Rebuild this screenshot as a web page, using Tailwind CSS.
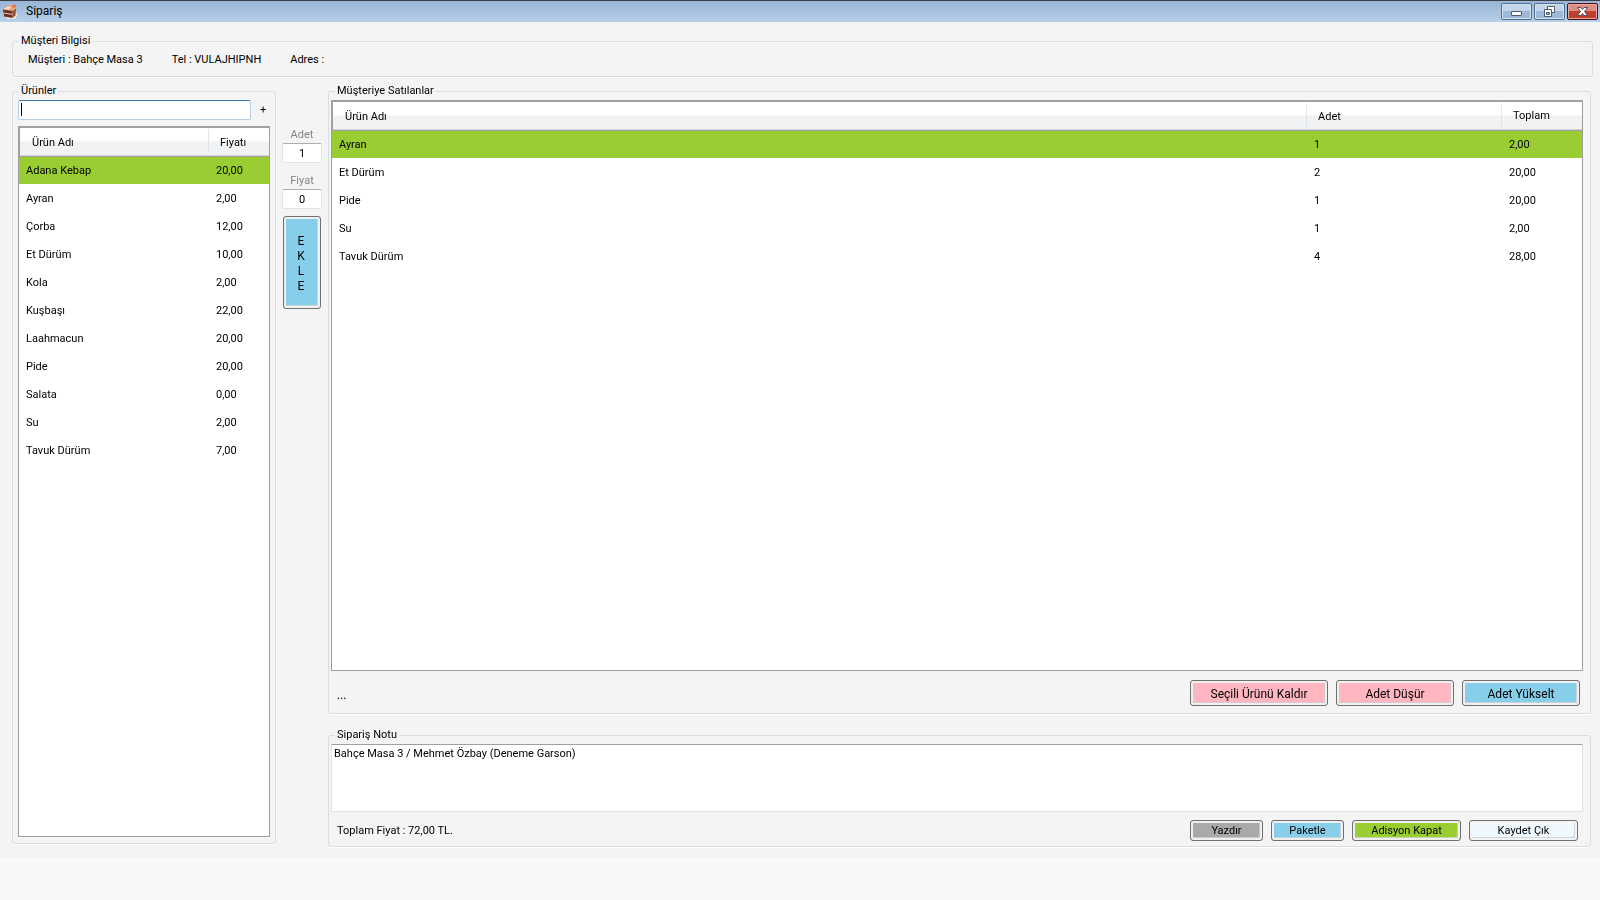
<!DOCTYPE html>
<html lang="tr">
<head>
<meta charset="utf-8">
<title>Sipariş</title>
<script src="https://cdn.jsdelivr.net/npm/@tailwindcss/browser@4"></script>
</head>
<body class="flex min-h-screen flex-col bg-[#f4f4f4] font-[Roboto,'Liberation_Sans',sans-serif] text-[11px] leading-[16px] text-black">

<header class="flex h-[22px] items-center border-t border-[#3a3f47] bg-linear-to-b from-[#98b4d5] to-[#b8d0e9] pl-0.5 pr-0.5">
  <svg class="h-4 w-4" viewBox="0 0 16 16" aria-hidden="true">
    <path d="M1 11 L6 15 H13 L15.500 11 L14 8 H2Z" fill="#f3e6e4"/>
    <path d="M1 5.500 L10.500 6.500 L10.500 14 L2 12.500Z" fill="#6b3024"/>
    <path d="M10.500 6.500 L14 4 L13.500 11.500 L10.500 14Z" fill="#9a4c38"/>
    <path d="M1 5.500 L5 1.500 L14 2 L14 4.500 L10.500 7Z" fill="#e9a27c"/>
    <path d="M2 5 L5.500 2.500 L9 3 L7 5.500Z" fill="#f8e3d3"/>
    <path d="M10 1 L13.500 .5 L14 3 L11 4Z" fill="#e8703c"/>
    <path d="M1.500 9 L10.500 10.300" stroke="#e3b9a4" stroke-width="1.200" fill="none"/>
  </svg>
  <h1 class="ml-2 flex-1 pb-px text-[12px]">Sipariş</h1>
  <div class="flex gap-0.5">
    <button aria-label="Simge durumuna küçült" class="flex h-[17px] w-[31px] items-center justify-center rounded-[2px] border border-[#55708f] bg-linear-to-b from-[#c3d5ea] from-50% to-[#9db9d8] to-50% shadow-[inset_0_0_0_1px_#d3e1f1]">
      <svg class="h-[13px] w-[13px]" viewBox="0 0 13 13"><rect x="1.500" y="6.500" width="10" height="4" rx=".5" fill="#fff" stroke="#4e5a6b"/></svg>
    </button>
    <button aria-label="Önceki boyut" class="flex h-[17px] w-[31px] items-center justify-center rounded-[2px] border border-[#55708f] bg-linear-to-b from-[#c3d5ea] from-50% to-[#9db9d8] to-50% shadow-[inset_0_0_0_1px_#d3e1f1]">
      <svg class="h-[13px] w-[13px]" viewBox="0 0 13 13" fill="#fff" stroke="#4e5a6b"><path d="M4.500 1.500h7v6h-7z"/><path d="M1.500 4.500h7v7h-7z"/><path d="M3.500 7.500h3v2h-3z" fill="#9db9d8"/></svg>
    </button>
    <button aria-label="Kapat" class="flex h-[17px] w-[31px] items-center justify-center rounded-[2px] border border-[#4d1019] bg-linear-to-b from-[#dd8f85] from-50% to-[#bf3f2c] to-50% shadow-[inset_0_0_0_1px_#e8aba3]">
      <svg class="h-[13px] w-[13px]" viewBox="0 0 13 13"><path d="M1.500 2.500h3.500l1.500 2 1.500-2h3.500l-3 4 3 4H8l-1.500-2-1.500 2H1.500l3-4z" fill="#fff" stroke="#4e5365"/></svg>
    </button>
  </div>
</header>

<main class="flex flex-1 flex-col gap-1.5 pb-[11px] pl-3 pr-[7px] pt-[11px]">
  <fieldset class="rounded-[3px] border border-[#d3dfe5] shadow-[0_1px_0_#fff]">
    <legend class="ml-1.5 h-4 px-0.5">Müşteri Bilgisi</legend>
    <div class="flex h-[27px] gap-[29px] pl-[15px] pt-[3px]">
      <span>Müşteri : Bahçe Masa 3</span><span>Tel : VULAJHIPNH</span><span>Adres :</span>
    </div>
  </fieldset>

  <div class="flex flex-1 gap-1.5 pr-0.5">
    <fieldset class="mb-[3px] flex w-[264px] flex-col rounded-[3px] border border-[#d3dfe5] px-[5px] pb-1.5 pt-px shadow-[0_1px_0_#fff]">
      <legend class="ml-px h-4 px-0.5">Ürünler</legend>
      <div class="flex">
        <input type="text" autofocus aria-label="Ürün ara" class="h-5 w-[233px] rounded-[2px] border border-[#b5cfe7] border-t-[#3d7bad] bg-white bg-linear-to-b from-black to-black bg-[length:1px_13px] bg-[position:2px_2px] bg-no-repeat px-0.5 caret-transparent outline-none">
        <button aria-label="Ürün ekle" class="ml-[5px] flex-1">+</button>
      </div>
      <div class="mt-1.5 flex-1 border border-[#a0a0a0] bg-white">
        <table class="w-full table-fixed border-collapse text-left">
          <thead class="bg-linear-to-b from-white from-45% to-[#f1f2f4] to-50% shadow-[inset_1px_1px_0_#a0a0a0,inset_0_-1px_0_#a0a0a0,inset_0_-2px_0_#d5d5d5]">
            <tr class="h-[30px]"><th class="pl-[13px] pt-px font-normal">Ürün Adı</th><th class="w-[61px] bg-linear-to-b from-[#e3e8ee] to-[#dfe2e6] bg-[length:1px_24px] bg-[position:0_2px] bg-no-repeat pl-3 pt-px font-normal">Fiyatı</th></tr>
          </thead>
          <tbody>
            <tr class="h-[27px] bg-[#9acd32]"><td class="pl-[7px] pt-px">Adana Kebap</td><td class="pl-2 pt-px">20,00</td></tr>
            <tr class="h-7"><td class="pl-[7px] pt-0.5">Ayran</td><td class="pl-2 pt-0.5">2,00</td></tr>
            <tr class="h-7"><td class="pl-[7px] pt-0.5">Çorba</td><td class="pl-2 pt-0.5">12,00</td></tr>
            <tr class="h-7"><td class="pl-[7px] pt-0.5">Et Dürüm</td><td class="pl-2 pt-0.5">10,00</td></tr>
            <tr class="h-7"><td class="pl-[7px] pt-0.5">Kola</td><td class="pl-2 pt-0.5">2,00</td></tr>
            <tr class="h-7"><td class="pl-[7px] pt-0.5">Kuşbaşı</td><td class="pl-2 pt-0.5">22,00</td></tr>
            <tr class="h-7"><td class="pl-[7px] pt-0.5">Laahmacun</td><td class="pl-2 pt-0.5">20,00</td></tr>
            <tr class="h-7"><td class="pl-[7px] pt-0.5">Pide</td><td class="pl-2 pt-0.5">20,00</td></tr>
            <tr class="h-7"><td class="pl-[7px] pt-0.5">Salata</td><td class="pl-2 pt-0.5">0,00</td></tr>
            <tr class="h-7"><td class="pl-[7px] pt-0.5">Su</td><td class="pl-2 pt-0.5">2,00</td></tr>
            <tr class="h-7"><td class="pl-[7px] pt-0.5">Tavuk Dürüm</td><td class="pl-2 pt-0.5">7,00</td></tr>
          </tbody>
        </table>
      </div>
    </fieldset>

    <div class="flex w-10 flex-col pt-11 text-center">
      <label for="adet" class="text-[#838383]">Adet</label>
      <input id="adet" type="text" value="1" class="h-5 w-full rounded-[2px] border border-[#e2e3ea] border-t-[#abadb3] bg-white text-center">
      <label for="fiyat" class="mt-2.5 text-[#838383]">Fiyat</label>
      <input id="fiyat" type="text" value="0" class="h-5 w-full rounded-[2px] border border-[#e2e3ea] border-t-[#abadb3] bg-white text-center">
      <button class="mx-px mt-[7px] h-[93px] rounded-[3px] border border-[#707070] bg-[#87ceeb] pr-0.5 pt-0.5 text-[12px] leading-[15px] shadow-[inset_0_0_0_2px_#f0f0f0,inset_-3px_-3px_0_#c8d3d8]">E<br>K<br>L<br>E</button>
    </div>

    <div class="flex flex-1 flex-col gap-[13px]">
      <fieldset class="flex flex-1 flex-col rounded-[3px] border border-[#d3dfe5] pb-[7px] pl-0.5 pr-[7px] pt-px shadow-[0_1px_0_#fff]">
        <legend class="ml-1 h-4 px-0.5">Müşteriye Satılanlar</legend>
        <div class="flex-1 border border-[#a0a0a0] bg-white">
          <table class="w-full table-fixed border-collapse text-left">
            <thead class="bg-linear-to-b from-white from-45% to-[#f1f2f4] to-50% shadow-[inset_1px_1px_0_#a0a0a0,inset_0_-1px_0_#a0a0a0,inset_0_-2px_0_#d5d5d5]">
              <tr class="h-[30px]"><th class="pl-[13px] pt-px font-normal">Ürün Adı</th><th class="w-[195px] bg-linear-to-b from-[#e3e8ee] to-[#dfe2e6] bg-[length:1px_24px] bg-[position:0_2px] bg-no-repeat pl-3 pt-px font-normal">Adet</th><th class="w-[81px] bg-linear-to-b from-[#e3e8ee] to-[#dfe2e6] bg-[length:1px_24px] bg-[position:0_2px] bg-no-repeat pl-3 font-normal">Toplam</th></tr>
            </thead>
            <tbody>
              <tr class="h-[27px] bg-[#9acd32]"><td class="pl-[7px] pt-px">Ayran</td><td class="pl-2 pt-px">1</td><td class="pl-2 pt-px">2,00</td></tr>
              <tr class="h-7"><td class="pl-[7px] pt-0.5">Et Dürüm</td><td class="pl-2 pt-0.5">2</td><td class="pl-2 pt-0.5">20,00</td></tr>
              <tr class="h-7"><td class="pl-[7px] pt-0.5">Pide</td><td class="pl-2 pt-0.5">1</td><td class="pl-2 pt-0.5">20,00</td></tr>
              <tr class="h-7"><td class="pl-[7px] pt-0.5">Su</td><td class="pl-2 pt-0.5">1</td><td class="pl-2 pt-0.5">2,00</td></tr>
              <tr class="h-7"><td class="pl-[7px] pt-0.5">Tavuk Dürüm</td><td class="pl-2 pt-0.5">4</td><td class="pl-2 pt-0.5">28,00</td></tr>
            </tbody>
          </table>
        </div>
        <div class="mt-[9px] flex items-center gap-2 pl-1.5 pr-[3px] text-[12px]">
          <span class="flex-1 pt-1">...</span>
          <button class="h-[26px] w-[138px] rounded-[3px] border border-[#707070] bg-[#ffb6c1] pt-0.5 shadow-[inset_0_0_0_2px_#f0f0f0,inset_-3px_-3px_0_#d8c8cb]">Seçili Ürünü Kaldır</button>
          <button class="h-[26px] w-[118px] rounded-[3px] border border-[#707070] bg-[#ffb6c1] pt-0.5 shadow-[inset_0_0_0_2px_#f0f0f0,inset_-3px_-3px_0_#d8c8cb]">Adet Düşür</button>
          <button class="h-[26px] w-[118px] rounded-[3px] border border-[#707070] bg-[#87ceeb] pt-0.5 shadow-[inset_0_0_0_2px_#f0f0f0,inset_-3px_-3px_0_#c8d3d8]">Adet Yükselt</button>
        </div>
      </fieldset>

      <fieldset class="flex flex-col rounded-[3px] border border-[#d3dfe5] pb-[5px] pl-0.5 pr-[7px] pt-px shadow-[0_1px_0_#fff]">
        <legend class="ml-1 h-4 px-0.5">Sipariş Notu</legend>
        <textarea aria-label="Sipariş Notu" spellcheck="false" class="block h-[68px] w-full resize-none border border-[#e2e3ea] border-t-[#a0a0a0] bg-white px-0.5 py-px outline-none">Bahçe Masa 3 / Mehmet Özbay (Deneme Garson)</textarea>
        <div class="mt-2 flex items-center gap-2 pl-1.5 pr-[5px]">
          <span class="flex-1">Toplam Fiyat : 72,00 TL.</span>
          <button class="h-[21px] w-[73px] rounded-[3px] border border-[#707070] bg-[#a9a9a9] shadow-[inset_0_0_0_2px_#f0f0f0,inset_-3px_-3px_0_#c8c8c8]">Yazdır</button>
          <button class="h-[21px] w-[73px] rounded-[3px] border border-[#707070] bg-[#87ceeb] shadow-[inset_0_0_0_2px_#f0f0f0,inset_-3px_-3px_0_#c8d3d8]">Paketle</button>
          <button class="h-[21px] w-[109px] rounded-[3px] border border-[#707070] bg-[#9acd32] shadow-[inset_0_0_0_2px_#f0f0f0,inset_-3px_-3px_0_#c8d3b0]">Adisyon Kapat</button>
          <button class="h-[21px] w-[109px] rounded-[3px] border border-[#707070] bg-[#f0f8ff] shadow-[inset_0_0_0_2px_#f4f4f4,inset_-3px_-3px_0_#cfd6dc]">Kaydet Çık</button>
        </div>
      </fieldset>
    </div>
  </div>
</main>

<footer class="h-[42px] bg-[#f7f8fa]"></footer>
</body>
</html>
